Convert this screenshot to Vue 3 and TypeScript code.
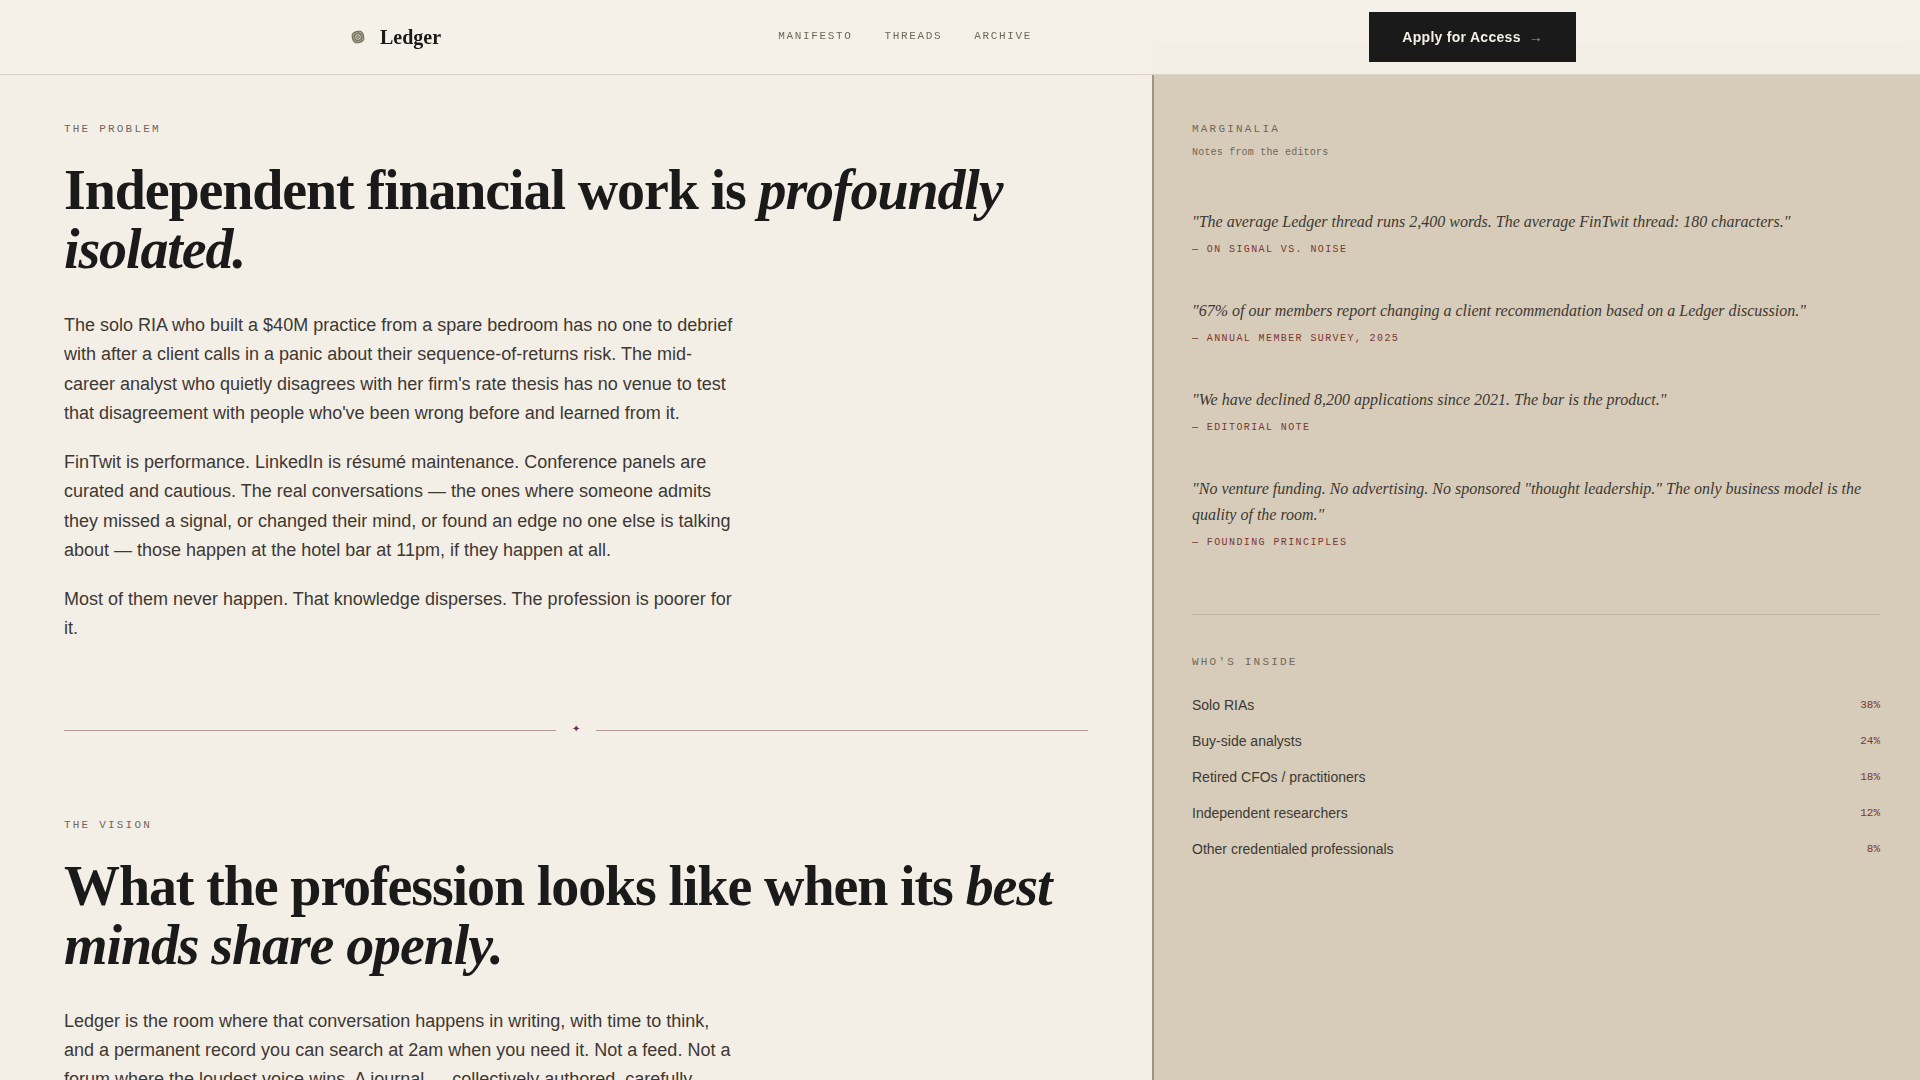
<script setup lang="ts">
interface NavLink {
  label: string
  href: string
}

interface Note {
  quote: string
  source: string
}

interface Cohort {
  name: string
  share: number
}

const links: NavLink[] = [
  { label: 'Manifesto', href: '#manifesto' },
  { label: 'Threads', href: '#threads' },
  { label: 'Archive', href: '#archive' },
]

const problem: string[] = [
  "The solo RIA who built a $40M practice from a spare bedroom has no one to debrief with after a client calls in a panic about their sequence-of-returns risk. The mid-career analyst who quietly disagrees with her firm's rate thesis has no venue to test that disagreement with people who've been wrong before and learned from it.",
  'FinTwit is performance. LinkedIn is résumé maintenance. Conference panels are curated and cautious. The real conversations — the ones where someone admits they missed a signal, or changed their mind, or found an edge no one else is talking about — those happen at the hotel bar at 11pm, if they happen at all.',
  'Most of them never happen. That knowledge disperses. The profession is poorer for it.',
]

const vision: string[] = [
  'Ledger is the room where that conversation happens in writing, with time to think, and a permanent record you can search at 2am when you need it. Not a feed. Not a forum where the loudest voice wins. A journal — collectively authored, carefully',
]

const notes: Note[] = [
  { quote: 'The average Ledger thread runs 2,400 words. The average FinTwit thread: 180 characters.', source: 'On signal vs. noise' },
  { quote: '67% of our members report changing a client recommendation based on a Ledger discussion.', source: 'Annual member survey, 2025' },
  { quote: 'We have declined 8,200 applications since 2021. The bar is the product.', source: 'Editorial note' },
  { quote: 'No venture funding. No advertising. No sponsored "thought leadership." The only business model is the quality of the room.', source: 'Founding principles' },
]

const cohorts: Cohort[] = [
  { name: 'Solo RIAs', share: 38 },
  { name: 'Buy-side analysts', share: 24 },
  { name: 'Retired CFOs / practitioners', share: 18 },
  { name: 'Independent researchers', share: 12 },
  { name: 'Other credentialed professionals', share: 8 },
]

const petals: number[] = [33, 78, 123, 168]
</script>

<template>
  <div class="page">
    <header class="topbar">
      <div class="topbar-inner">
        <a class="brand" href="#top">
          <svg class="rosette" viewBox="0 0 28 28" aria-hidden="true">
            <rect x="8.4" y="8.4" width="11.2" height="11.2" rx="4" fill="currentColor" fill-opacity="0.3" transform="rotate(-12 14 14)" />
            <g fill="none" stroke="currentColor" stroke-width="0.8">
              <rect x="8.4" y="8.4" width="11.2" height="11.2" rx="4" transform="rotate(-12 14 14)" />
              <ellipse v-for="a in petals" :key="a" cx="14" cy="14" rx="5.8" ry="3.2" stroke-width="0.6" :transform="`rotate(${a} 14 14)`" />
              <circle cx="14" cy="14" r="1.4" />
            </g>
          </svg>
          <span>Ledger</span>
        </a>
        <nav class="nav">
          <a v-for="l in links" :key="l.href" :href="l.href">{{ l.label }}</a>
        </nav>
        <button class="apply" type="button">
          Apply for Access <span class="arrow">→</span>
        </button>
      </div>
    </header>

    <main class="columns">
      <article class="story">
        <section>
          <p class="eyebrow">The Problem</p>
          <h2>Independent financial work is <em>profoundly isolated.</em></h2>
          <div class="prose">
            <p v-for="(t, i) in problem" :key="i">{{ t }}</p>
          </div>
        </section>
        <div class="ornament" role="separator"><span>✦</span></div>
        <section>
          <p class="eyebrow">The Vision</p>
          <h2>What the profession looks like when its <em>best minds share openly.</em></h2>
          <div class="prose">
            <p v-for="(t, i) in vision" :key="i">{{ t }}</p>
          </div>
        </section>
      </article>

      <aside class="margin">
        <p class="eyebrow">Marginalia</p>
        <p class="sub">Notes from the editors</p>
        <div class="notes">
          <figure v-for="n in notes" :key="n.source">
            <blockquote>"{{ n.quote }}"</blockquote>
            <figcaption>— {{ n.source }}</figcaption>
          </figure>
        </div>
        <section class="inside">
          <h3 class="eyebrow">Who's Inside</h3>
          <dl>
            <div v-for="c in cohorts" :key="c.name" class="row">
              <dt>{{ c.name }}</dt>
              <dd>{{ c.share }}%</dd>
            </div>
          </dl>
        </section>
      </aside>
    </main>
  </div>
</template>

<style>
body {
  margin: 0;
  background: #f4efe6;
}
</style>

<style scoped>
.page {
  --paper: #f4efe6;
  --ink: #1a1a1a;
  --body: #3d3833;
  --muted: #6f675b;
  --wine: #7b3532;
  --serif: "Liberation Serif", serif;
  --sans: "Liberation Sans", sans-serif;
  --mono: "Liberation Mono", monospace;
  height: 100vh;
  overflow: hidden;
  background: var(--paper);
  color: var(--ink);
  font-family: var(--sans);
  line-height: 1.5;
}

p,
h2,
h3,
dl,
dd,
figure,
blockquote {
  margin: 0;
}

.topbar {
  position: fixed;
  top: 0;
  left: 0;
  right: 0;
  z-index: 2;
  background: rgba(244, 239, 232, 0.95);
  backdrop-filter: blur(8px);
  border-bottom: 1px solid #dad4c9;
}

.topbar-inner {
  display: flex;
  align-items: center;
  justify-content: space-between;
  max-width: 1232px;
  margin: 0 auto;
  padding: 12px 24px;
}

.brand {
  display: flex;
  align-items: center;
  gap: 8px;
  color: var(--ink);
  font: 700 20px/28px var(--serif);
  text-decoration: none;
}

.rosette {
  width: 28px;
  height: 28px;
  color: #686250;
}

.nav {
  display: flex;
  gap: 32px;
}

.nav a {
  padding-bottom: 2px;
  color: var(--muted);
  font-family: var(--mono);
  font-size: 11px;
  letter-spacing: 0.15em;
  text-decoration: none;
  text-transform: uppercase;
}

.apply {
  display: flex;
  align-items: center;
  gap: 8px;
  padding: 14px 32px;
  border: 1px solid var(--ink);
  background: var(--ink);
  color: var(--paper);
  font: 700 14px/20px var(--sans);
  letter-spacing: 0.02em;
}

.arrow {
  font-weight: 400;
  opacity: 0.6;
}

.columns {
  display: grid;
  grid-template-columns: 3fr 2fr;
  min-height: 100%;
  margin-top: 41px;
}

.story {
  min-width: 0;
  padding: 80px 64px;
}

.eyebrow {
  color: var(--muted);
  font: 400 11px/16px var(--mono);
  letter-spacing: 0.2em;
  text-transform: uppercase;
}

h2 {
  margin: 24px 0 32px;
  font: 700 56px/59px var(--serif);
  letter-spacing: -0.02em;
}

.prose {
  display: flex;
  flex-direction: column;
  gap: 20px;
  max-width: 672px;
  color: var(--body);
  font-size: 18px;
  line-height: 1.625;
}

.ornament {
  display: flex;
  align-items: center;
  gap: 16px;
  margin: 78px 0;
  color: #6e2a2a;
  font-size: 10px;
  line-height: 14px;
}

.ornament span {
  padding-bottom: 3px;
}

.ornament::before,
.ornament::after {
  content: "";
  flex: 1;
  height: 1px;
  background: #b79d98;
}

.margin {
  min-width: 0;
  padding: 80px 40px 80px 38px;
  border-left: 2px solid #a0957f;
  background: #d7ccb9;
}

.sub {
  margin-top: 8px;
  color: var(--muted);
  font: 400 10px/16px var(--mono);
  letter-spacing: 0.02em;
}

.notes {
  display: flex;
  flex-direction: column;
  gap: 40px;
  margin-top: 48px;
}

blockquote {
  color: var(--body);
  font: italic 400 16px/26px var(--serif);
}

figcaption {
  margin-top: 7px;
  color: var(--wine);
  font: 400 10px/16px var(--mono);
  letter-spacing: 0.14em;
  text-transform: uppercase;
}

.inside {
  margin-top: 63px;
  padding-top: 39px;
  border-top: 1px solid #bfb4a0;
}

dl {
  display: flex;
  flex-direction: column;
  gap: 16px;
  margin-top: 25px;
}

.row {
  display: flex;
  align-items: center;
  justify-content: space-between;
  font-size: 14px;
  line-height: 20px;
  color: var(--body);
}

dd {
  color: var(--wine);
  font-family: var(--mono);
  font-size: 11px;
}
</style>
